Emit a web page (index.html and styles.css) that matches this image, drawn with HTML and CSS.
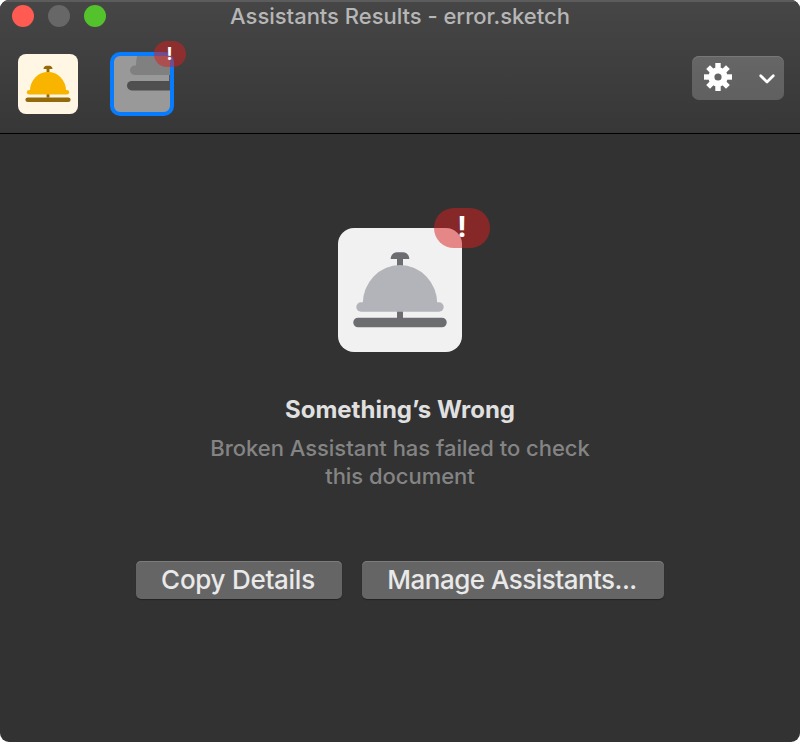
FILE: index.html
```html
<!DOCTYPE html>
<html lang="en">
<head>
<meta charset="utf-8">
<title>Assistants Results - error.sketch</title>
<link rel="stylesheet" href="styles.css">
</head>
<body>
<svg class="defs" width="0" height="0" aria-hidden="true">
  <symbol id="bell" viewBox="0 0 124 124">
    <path class="metal" d="M52.7 31c0-4 2.8-6.7 6.3-6.7h6c3.5 0 6.3 2.7 6.3 6.7H65v8h-6v-8zM59 82h6v8h-6z"/>
    <rect class="metal" x="15.3" y="89.7" width="93.4" height="9.6" rx="4.8"/>
    <path class="dome" d="M24.7 76a37.3 39 0 0 1 74.6 0z"/>
    <rect class="dome" x="18.3" y="74.3" width="87.4" height="9.4" rx="4.7"/>
  </symbol>
</svg>
<div class="window">
  <header class="toolbar">
    <div class="titlebar">
      <div class="lights"><i class="light close"></i><i class="light minimize"></i><i class="light maximize"></i></div>
      <h1 class="title">Assistants Results - error.sketch</h1>
    </div>
    <div class="tools">
      <div class="tile gold"><svg width="60" height="60"><use href="#bell"/></svg></div>
      <div class="tile selected">
        <svg width="56" height="56" viewBox="2.3 64.8 56 56">
          <path class="dome" d="M24.2 76q0-7 1.4-12h73v12z"/>
          <rect class="dome" x="18.3" y="74.3" width="87.4" height="9.4" rx="4.7"/>
          <rect class="metal" x="15.3" y="89.7" width="93.4" height="9.6" rx="4.8"/>
          <path class="metal" d="M57.4 83.7h2v6h-2z"/>
        </svg>
        <span class="badge small">!</span>
      </div>
      <button class="menu" aria-label="Settings">
        <svg class="gear" width="28" height="28" viewBox="-14 -14 28 28">
          <path id="tooth" d="M-2.7-14h5.4v28h-5.4z"/>
          <use href="#tooth" transform="rotate(45)"/>
          <use href="#tooth" transform="rotate(90)"/>
          <use href="#tooth" transform="rotate(135)"/>
          <circle r="9.7"/>
          <circle class="hole" r="3.6"/>
        </svg>
        <svg class="chevron" width="16" height="10" viewBox="0 0 16 10"><path d="M1.7 1.7L8 8l6.3-6.3"/></svg>
      </button>
    </div>
  </header>
  <main class="content">
    <div class="hero">
      <svg width="124" height="124"><use href="#bell"/></svg>
      <span class="badge large">!</span>
    </div>
    <h2 class="heading">Something’s Wrong</h2>
    <p class="message">Broken Assistant has failed to check<br>this document</p>
    <div class="actions">
      <button class="action copy">Copy Details</button>
      <button class="action manage">Manage Assistants...</button>
    </div>
  </main>
</div>
</body>
</html>
```
FILE: styles.css
```css
* { box-sizing: border-box; }
body { margin: 0; background: #fff; font-family: Inter, "Liberation Sans", sans-serif; }
button { border: 0; padding: 0; font-family: inherit; }
.defs { display: none; }
svg { display: block; }
.window { height: 742px; border-radius: 9px; overflow: hidden; background: #323232; }
.toolbar {
  height: 134px;
  background: linear-gradient(#464646, #373737);
  border-bottom: 1px solid #000;
  box-shadow: inset 0 2px 0 #5c5c5c;
}
.titlebar { height: 32px; display: grid; grid-template-columns: 120px 1fr 120px; align-items: center; }
.lights { display: flex; gap: 14px; padding-left: 12px; }
.light { width: 22px; height: 22px; border-radius: 50%; }
.close { background: #ff5b52; }
.minimize { background: #676767; }
.maximize { background: #53c22c; }
.title { margin: 0; text-align: center; white-space: nowrap; font-size: 22px; line-height: 32px; font-weight: 450; letter-spacing: -.02px; color: #b6b6b6; }
.tools { display: flex; align-items: flex-start; padding: 20px 16px 0 18px; }
.tile { position: relative; }
.gold { --dome: #f9b400; --metal: #946a0a; width: 60px; height: 60px; margin-top: 2px; border-radius: 8px; background: #fff6e4; }
.selected { --dome: #808080; --metal: #4f4f4f; width: 64px; height: 64px; margin-left: 32px; border: 4px solid #087cff; border-radius: 10px; background: #999; }
.dome { fill: var(--dome); }
.metal { fill: var(--metal); }
.badge { position: absolute; display: flex; justify-content: center; align-items: center; color: #fff; font-weight: 700; background: rgba(218, 30, 30, .5); }
.small { left: 40px; top: -15px; width: 32px; height: 26px; padding: 0 1px 2px 0; border-radius: 13px; font-size: 18px; }
.large { left: 96px; top: -20px; width: 56px; height: 40px; padding-bottom: 2px; border-radius: 20px; font-size: 28px; }
.menu { width: 92px; height: 44px; margin: 4px 0 0 auto; padding: 0 9.5px 0 12px; display: flex; align-items: center; justify-content: space-between; border-radius: 7px; background: linear-gradient(#666, #606060); box-shadow: inset 0 1px 0 #777; }
.gear { fill: #fff; margin-top: -2px; }
.hole { fill: #646464; }
.chevron { fill: none; stroke: #fff; stroke-width: 2.7; stroke-linecap: round; stroke-linejoin: round; margin-top: 1px; }
.content { display: flex; flex-direction: column; align-items: center; padding-top: 94px; }
.hero { position: relative; width: 124px; height: 124px; border-radius: 16px; background: #f1f1f1; --dome: #b3b4b9; --metal: #6c6d70; }
.heading { margin: 42px 0 0; font-size: 24px; line-height: 32px; font-weight: 700; color: #e0e0e0; white-space: nowrap; }
.message { margin: 8px 0 0; font-size: 22px; line-height: 28px; font-weight: 450; letter-spacing: -.03px; text-align: center; color: #848484; white-space: nowrap; }
.actions { display: flex; gap: 20px; margin-top: 71px; }
.action { height: 38px; border-radius: 5px; background: #656565; box-shadow: inset 0 1px 0 #7b7b7b, 0 1px 1px #222; color: #e9e9e9; font-size: 26px; line-height: 38px; font-weight: 450; white-space: nowrap; }
.copy { width: 206px; padding-right: 2px; letter-spacing: -.28px; }
.manage { width: 302px; padding-right: 2px; letter-spacing: -.52px; }
```
